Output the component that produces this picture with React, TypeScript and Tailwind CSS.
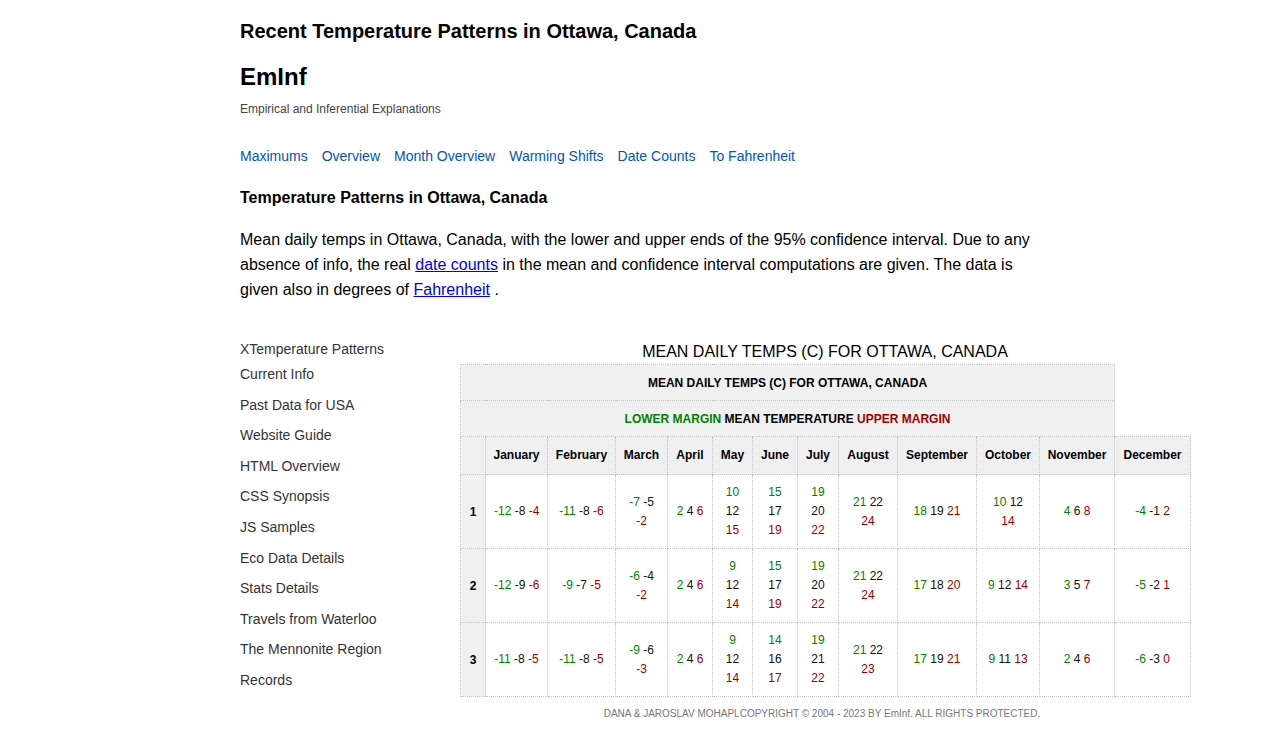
import React from 'react';

const navLinks = ['Maximums', 'Overview', 'Month Overview', 'Warming Shifts', 'Date Counts', 'To Fahrenheit'];

const sideLinks = [
  'Current Info',
  'Past Data for USA',
  'Website Guide',
  'HTML Overview',
  'CSS Synopsis',
  'JS Samples',
  'Eco Data Details',
  'Stats Details',
  'Travels from Waterloo',
  'The Mennonite Region',
  'Records',
];

const months = [
  ['January', 'w-[62px]'],
  ['February', 'w-[68px]'],
  ['March', 'w-[52px]'],
  ['April', 'w-[45px]'],
  ['May', 'w-[40px]'],
  ['June', 'w-[45px]'],
  ['July', 'w-[41px]'],
  ['August', 'w-[59px]'],
  ['September', 'w-[79px]'],
  ['October', 'w-[63px]'],
  ['November', 'w-[75px]'],
  ['December', 'w-[76px]'],
];

// lines split by "|", values by space; order is always lower / mean / upper
const rows = [
  ['-12 -8 -4', '-11 -8 -6', '-7 -5|-2', '2 4 6', '10|12|15', '15|17|19', '19|20|22', '21 22|24', '18 19 21', '10 12|14', '4 6 8', '-4 -1 2'],
  ['-12 -9 -6', '-9 -7 -5', '-6 -4|-2', '2 4 6', '9|12|14', '15|17|19', '19|20|22', '21 22|24', '17 18 20', '9 12 14', '3 5 7', '-5 -2 1'],
  ['-11 -8 -5', '-11 -8 -5', '-9 -6|-3', '2 4 6', '9|12|14', '14|16|17', '19|21|22', '21 22|23', '17 19 21', '9 11 13', '2 4 6', '-6 -3 0'],
];

const tone = ['text-[#008000]', 'text-[#111]', 'text-[#990000]'];

function Cell({ value }: { value: string }) {
  let idx = 0;
  return (
    <td className="border border-dotted border-[#c4c4c4] px-2 py-2 text-center align-middle leading-[19px]">
      {value.split('|').map((line, li) => (
        <div key={li} className="whitespace-nowrap">
          {line.split(' ').map((v, vi) => {
            const c = tone[idx++];
            return (
              <span key={vi} className={c}>
                {vi > 0 ? ' ' : ''}
                {v}
              </span>
            );
          })}
        </div>
      ))}
    </td>
  );
}

export default function App() {
  return (
    <div className="min-h-screen bg-white font-['Liberation_Sans',Arial,sans-serif] text-black">
      <div className="mx-auto w-[800px] pt-[19px]">
        <h1 className="text-[20px] font-bold leading-[24px]">Recent Temperature Patterns in Ottawa, Canada</h1>
        <div className="mt-[20px] text-[24px] font-bold leading-[28px]">EmInf</div>
        <div className="mt-[10px] text-[12px] leading-[16px] text-[#444]">Empirical and Inferential Explanations</div>

        <nav className="mt-[29px] flex gap-[14px] text-[14px] leading-[20px] text-[#0056b3]">
          {navLinks.map((l) => (
            <a key={l} href="#">
              {l}
            </a>
          ))}
        </nav>

        <h2 className="mt-[22px] text-[16px] font-bold leading-[20px]">Temperature Patterns in Ottawa, Canada</h2>
        <p className="mt-[19px] text-[16px] leading-[25px]">
          Mean daily temps in Ottawa, Canada, with the lower and upper ends of the 95% confidence interval. Due to any
          absence of info, the real{' '}
          <a href="#" className="text-[#0000ee] underline">
            date counts
          </a>{' '}
          in the mean and confidence interval computations are given. The data is given also in degrees of{' '}
          <a href="#" className="text-[#0000ee] underline">
            Fahrenheit
          </a>{' '}
          .
        </p>

        <div className="mt-[37px] flex">
          <aside className="w-[220px] shrink-0 text-[14px] text-[#333]">
            <div className="leading-[20px]">XTemperature Patterns</div>
            {sideLinks.map((s) => (
              <div key={s} className="h-[30.6px] leading-[30.6px]">
                {s}
              </div>
            ))}
          </aside>

          <main className="w-[730px] shrink-0">
            <div className="pt-[3px] pb-[2px] text-center text-[16px] leading-[20px]">
              MEAN DAILY TEMPS (C) FOR OTTAWA, CANADA
            </div>
            <table className="w-[730px] table-fixed border-collapse text-[12px]">
              <colgroup>
                <col className="w-[25px]" />
                {months.map(([m, w]) => (
                  <col key={m} className={w} />
                ))}
              </colgroup>
              <thead>
                <tr className="h-[36px]">
                  <th colSpan={12} className="border border-dotted border-[#c4c4c4] bg-[#f0f0f0] font-bold">
                    MEAN DAILY TEMPS (C) FOR OTTAWA, CANADA
                  </th>
                </tr>
                <tr className="h-[36px]">
                  <th colSpan={12} className="border border-dotted border-[#c4c4c4] bg-[#f0f0f0] font-bold">
                    <span className="text-[#008000]">LOWER MARGIN</span> MEAN TEMPERATURE{' '}
                    <span className="text-[#990000]">UPPER MARGIN</span>
                  </th>
                </tr>
                <tr className="h-[38px]">
                  <th className="border border-dotted border-[#c4c4c4] bg-[#f0f0f0]"></th>
                  {months.map(([m]) => (
                    <th key={m} className="border border-dotted border-[#c4c4c4] bg-[#f0f0f0] pb-[2px] font-bold">
                      {m}
                    </th>
                  ))}
                </tr>
              </thead>
              <tbody>
                {rows.map((r, i) => (
                  <tr key={i}>
                    <td className="border border-dotted border-[#c4c4c4] bg-[#f0f0f0] text-center font-bold">{i + 1}</td>
                    {r.map((v, j) => (
                      <Cell key={j} value={v} />
                    ))}
                  </tr>
                ))}
              </tbody>
            </table>
            <div className="mt-[10px] pr-[6px] text-center text-[10px] leading-[14px] text-[#777]">
              DANA &amp; JAROSLAV MOHAPLCOPYRIGHT © 2004 - 2023 BY EmInf. ALL RIGHTS PROTECTED.
            </div>
          </main>
        </div>
      </div>
    </div>
  );
}
